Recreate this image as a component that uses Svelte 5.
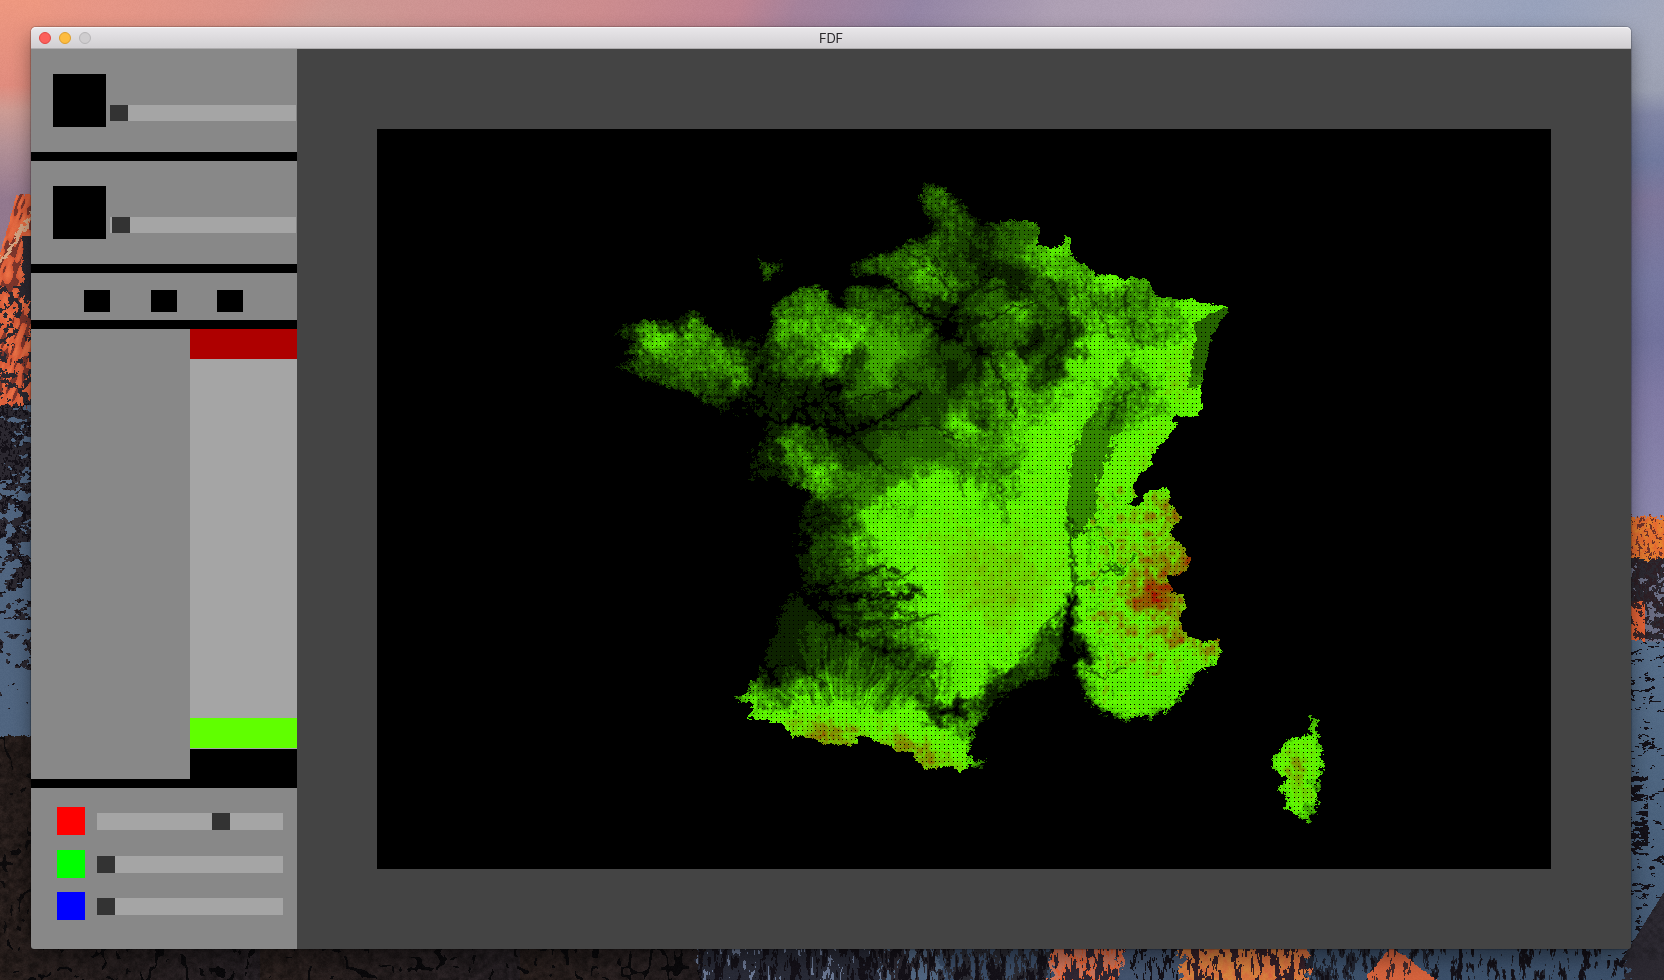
<script>
  import { onMount } from 'svelte';

  const views = [
    { knob: 0 },
    { knob: 2 },
  ];
  const modes = [1, 2, 3];
  const channels = [
    { name: 'red', knob: 115 },
    { name: 'lime', knob: 0 },
    { name: 'blue', knob: 0 },
  ];

  let mapCanvas;
  let wallCanvas;

  // ---------- noise ----------
  function hash(x, y) {
    let h = Math.imul(x, 374761393) + Math.imul(y, 668265263);
    h = Math.imul(h ^ (h >>> 13), 1274126177);
    return ((h ^ (h >>> 16)) >>> 0) / 4294967296;
  }
  function noise(x, y) {
    const xi = Math.floor(x), yi = Math.floor(y);
    let u = x - xi, v = y - yi;
    u = u * u * (3 - 2 * u);
    v = v * v * (3 - 2 * v);
    const a = hash(xi, yi), b = hash(xi + 1, yi), c = hash(xi, yi + 1), d = hash(xi + 1, yi + 1);
    return a + (b - a) * u + (c - a) * v + (a - b - c + d) * u * v;
  }
  function fbm(x, y) {
    return noise(x, y) * 0.5 + noise(x * 2.1 + 9, y * 2.1) * 0.28 + noise(x * 4.3, y * 4.3 + 5) * 0.22;
  }
  function ridge(x, y) {
    return Math.abs(noise(x, y) - 0.5) * 1.2 + Math.abs(noise(x * 2.1 + 3, y * 2.1) - 0.5) * 0.8;
  }

  // ---------- terrain ----------
  const mainland = [
    613,333,624,323,650,320,667,320,680,312,697,312,709,325,717,335,728,328,747,335,768,335,771,322,770,302,800,287,813,285,832,291,837,300,845,311,
    843,303,838,291,850,283,890,284,888,279,846,276,851,265,868,254,893,250,913,236,929,237,926,213,918,197,925,181,945,188,960,200,972,213,983,220,
    1000,221,1020,220,1037,222,1039,233,1037,245,1053,248,1062,245,1065,235,1071,234,1070,247,1072,257,1083,262,1098,275,1112,273,1125,280,1133,276,
    1148,280,1157,298,1167,295,1177,300,1192,297,1197,303,1213,303,1228,307,1222,320,1212,333,1207,353,1202,373,1200,397,1203,405,1197,416,1185,417,
    1175,413,1171,422,1178,422,1168,437,1152,452,1151,465,1137,475,1133,487,1137,492,1135,498,1128,503,1137,506,1142,500,1143,492,1168,488,1169,503,
    1173,507,1181,518,1171,527,1172,535,1180,542,1190,557,1187,568,1178,575,1166,577,1172,592,1183,595,1187,605,1179,617,1183,632,1203,642,1220,639,
    1221,650,1213,665,1198,673,1184,692,1169,710,1147,717,1128,720,1100,711,1086,700,1080,685,1072,675,1050,682,1030,681,1017,694,1000,704,987,717,
    975,729,967,757,983,760,987,765,972,765,958,772,950,765,928,770,913,758,913,752,897,750,892,745,880,742,868,737,857,735,857,744,823,744,813,737,
    792,736,783,725,767,720,748,717,753,708,750,702,733,697,743,693,758,677,761,660,765,643,775,623,781,597,786,588,798,592,800,577,790,550,793,520,
    805,500,808,490,787,484,750,482,746,467,748,452,765,440,761,420,739,418,719,411,700,397,664,386,637,375,614,365,638,357,621,352,635,340,616,340,
  ];
  const corsica = [
    1313,713,1317,723,1315,740,1323,757,1318,783,1318,803,1309,825,1297,819,1285,805,1287,796,1276,788,1287,779,1273,771,1272,757,1286,742,1302,734,
    1310,737,1311,723,
  ];
  const cotentin = [755,256,765,262,773,265,784,260,786,268,773,273,768,283,762,279,760,267];
  const rhinePlain = [1193,322,1212,312,1230,306,1214,335,1206,365,1202,385,1187,388,1190,365,1195,340];
  const saonePlain = [1094,414,1106,400,1120,396,1128,403,1124,420,1113,440,1105,460,1099,480,1096,505,1092,520,1074,540,1067,515,1068,470,1073,450,1082,428];

  const spots = [
    625,330,.25, 657,343,.85, 637,355,.35, 690,335,.75, 700,345,.65, 720,352,.7, 730,360,.5, 680,320,.15, 690,365,.6, 650,365,.4, 665,375,.35, 738,375,.65,
    720,390,.3, 700,385,.4, 735,337,.15, 760,350,.15, 755,375,.15, 745,400,.08, 750,420,.15, 780,310,.35, 800,310,.6, 785,325,.75, 800,328,.9, 820,310,.7,
    835,330,.75, 843,342,1.03, 830,350,.85, 862,328,.9, 875,335,.7, 828,362,.9, 800,350,.55, 790,365,.5, 775,350,.35, 855,362,.25, 890,350,.75, 880,370,.7,
    860,385,.45, 878,405,.35, 905,340,.55, 870,300,.45, 890,300,.4, 840,300,.2, 780,385,.18, 760,395,.12, 800,385,.2, 830,385,.15, 800,410,.12, 850,385,.35,
    840,405,.15, 900,380,.38, 930,380,.38, 930,410,.28, 900,420,.33, 860,430,.2, 840,430,.12, 800,435,.5, 790,450,.65, 810,465,.8, 825,475,.9, 840,480,.6,
    770,445,.18, 765,465,.15, 780,470,.15, 830,440,.15, 870,450,.3, 900,450,.42, 930,450,.45, 880,480,.5, 900,472,.5, 860,500,.5, 820,450,.4, 850,465,.35,
    870,268,.35, 900,262,.45, 915,255,.5, 925,270,.75, 935,285,.65, 950,292,.7, 960,300,.3, 940,300,.2, 880,280,.3, 935,200,.5, 942,210,.45, 930,225,.2,
    950,225,.4, 965,240,.35, 985,230,.2, 1000,240,.4, 1020,228,.45, 1030,235,.45, 1010,255,.4, 980,260,.15, 1000,270,.15, 1015,280,.15, 1040,252,.8,
    1055,250,1, 1068,240,.8, 1050,265,.8, 1080,272,.7, 1035,275,.3, 1060,290,.4, 1000,285,.4, 960,310,.2, 950,330,.05, 990,310,.45, 1000,320,.5,
    1020,312,.75, 1010,335,.4, 975,325,.35, 1040,300,.35, 1050,320,.4, 1060,335,.3, 1040,335,.12, 1070,350,.4, 975,345,.15, 1000,340,.4, 1025,350,.12,
    990,355,.2, 960,350,.3, 955,375,.15, 1000,365,.55, 1015,370,.75, 1000,380,.6, 1050,365,.25, 1040,375,.35, 1070,335,.35, 960,275,.3, 940,250,.4,
    1085,300,.7, 1095,320,.8, 1115,282,1.03, 1112,305,.5, 1090,290,.8, 1100,340,.98, 1130,295,.6, 1122,320,.75, 1140,300,.6, 1150,310,.75, 1170,315,.7,
    1190,305,1.03, 1210,305,1, 1140,330,.65, 1160,335,.7, 1175,325,.85, 1180,350,1.1, 1090,350,1.02, 1080,370,.98, 1060,390,.9, 1110,370,1.06, 1150,360,1.03,
    1180,370,1.12, 1175,385,1.16, 1150,390,.9, 1190,390,1.03, 1195,405,1.03, 1000,400,.65, 1025,395,.75, 1040,410,.75, 1060,420,1.05, 1040,440,1.05,
    1080,400,1.02, 1000,420,.6, 962,427,.95, 952,435,.7, 980,420,.35, 990,450,.65, 1000,440,.8, 960,450,.5, 940,440,.4, 1020,420,.9, 1010,470,.6,
    1030,480,1.04, 1000,490,.8, 1050,470,1.03, 1060,450,1.04, 1140,410,.9, 1155,430,1.1, 1130,440,1.0, 1140,460,1.15, 1120,470,1.04, 1115,500,1.08,
    1110,520,1.06, 1115,388,.7, 1130,383,.55, 1142,395,.6, 1130,410,.65, 900,490,1.02, 930,485,1.04, 960,490,1.04, 870,510,1, 885,530,1.04, 930,530,1.1, 950,550,1.15,
    975,560,1.25, 965,580,1.24, 985,600,1.22, 1010,560,1.2, 1005,590,1.26, 1000,620,1.2, 960,620,1.06, 920,580,1.06, 940,650,1.06, 970,650,1.06,
    970,685,1.06, 1000,660,1.06, 1020,540,1.12, 1050,560,1.1, 1030,590,1.2, 1055,600,1.1, 1010,510,1.06, 1040,520,1.05, 930,610,1.04, 905,600,.95,
    905,620,.85, 930,672,1.03, 1020,640,1.1, 1040,620,1.08, 950,510,1.06, 895,560,1.04, 862,540,.8, 860,560,.65, 880,560,.95, 880,585,.7, 855,580,.45,
    830,575,.3, 810,570,.2, 820,550,.3, 800,540,.08, 830,530,.2, 840,550,.4, 815,510,.15, 840,505,.35, 825,600,.15, 850,600,.22, 880,605,.4, 870,625,.5,
    895,625,.75, 850,615,.25, 820,610,.18, 910,640,.65, 790,610,.14, 780,640,.15, 800,640,.2, 820,630,.3, 830,640,.35, 775,670,.12, 800,660,.2, 790,680,.3,
    845,650,.35, 850,670,.45, 870,665,.4, 880,645,.22, 900,660,.28, 925,665,.35, 890,680,.5, 910,680,.45, 930,686,.5, 820,690,.75, 845,690,.7, 815,705,1,
    790,700,.6, 770,700,.6, 755,705,1, 770,715,1.05, 800,720,1.1, 790,730,1.3, 810,730,1.4, 830,735,1.5, 850,738,1.35, 840,715,1.04, 870,715,1.03,
    880,700,.75, 900,715,1.02, 880,735,1.25, 900,745,1.4, 915,750,1.45, 925,760,1.45, 945,757,1.3, 940,735,1.12, 920,725,1.06, 955,745,1.02,
    950,765,1.25, 940,697,1.04, 962,693,1.04, 940,708,.2, 960,710,.15, 985,700,.25, 965,725,.8, 1020,672,.3, 1040,655,.45, 1058,635,.3, 1070,655,.02,
    1060,672,.02, 1080,650,.1, 1000,690,.15, 1010,685,.25, 1100,550,1.05, 1090,560,1.04, 1120,540,1.1, 1150,500,1.1, 1150,520,1.2, 1175,515,1.65,
    1165,530,1.3, 1160,550,1.35, 1180,555,1.6, 1175,562,1.55, 1140,560,1.3, 1130,580,1.35, 1150,590,1.6, 1145,600,1.55, 1170,605,1.45, 1130,530,1.1,
    1110,590,1.15, 1110,620,1.15, 1100,600,1.06, 1140,620,1.2, 1165,630,1.4, 1180,630,1.45, 1205,645,1.45, 1150,650,1.15, 1120,650,1.1, 1100,630,1.08,
    1190,660,1.08, 1180,675,1, 1160,688,.8, 1130,697,1.04, 1110,692,.95, 1095,680,.8, 1090,665,.95, 1110,665,1.04, 1140,705,.9, 1105,570,1.06,
    1150,670,1.1, 1090,610,1.04, 1085,580,1.03, 1130,680,1.05, 1295,760,1.25, 1300,775,1.35, 1305,790,1.2, 1308,800,1.15, 1313,725,1.04, 1282,765,1.04,
    1318,780,.9, 1310,815,.8, 1285,800,1.03, 1295,740,1.05, 1315,755,1.06, 770,268,.45,
  ];
  const rivers = [
    [4.5, .85, 850,280,890,283,905,295,915,310,930,315,945,320,955,325],
    [3, .6, 955,325,962,345,990,355,997,370,1005,390,1015,415],
    [3, .7, 950,315,965,292,985,280,995,270],
    [2.5, .6, 970,290,1000,287,1030,290],
    [2.5, .6, 955,322,990,318,1010,308,1035,303],
    [4, .5, 1048,280,1062,300,1068,330,1062,350,1045,362],
    [2, .4, 1080,275,1092,300,1105,325,1110,340],
    [2, .3, 1072,285,1084,310,1090,335],
    [2.5, .45, 1127,285,1126,310,1132,330,1140,345],
    [2, .3, 1145,290,1148,315,1155,340],
    [1.6, .5, 900,245,920,262,940,280,952,296],
    [1.6, .45, 912,243,930,256,948,275],
    [4.5, .85, 745,418,770,420,807,423,847,433,867,425,900,410,920,393],
    [2, .5, 847,433,880,428,930,425,960,440],
    [2, .5, 847,433,870,455,890,470],
    [3, .7, 828,424,820,400,830,390,850,382],
    [2, .5, 835,405,870,395,900,388],
    [2, .6, 900,290,925,312,950,318],
    [6, .95, 792,580,803,595,823,613,843,633],
    [4, .6, 843,633,863,643,880,650,907,650],
    [3, .45, 880,650,895,662,907,670,933,683],
    [2.5, .35, 893,662,893,685,885,705],
    [4, .85, 800,592,820,597,870,597,907,595,920,588],
    [3, .7, 805,590,820,585,847,582,865,575,883,567,900,572],
    [2, .55, 823,583,835,572,850,562],
    [2, .55, 873,592,890,580,905,576,915,568],
    [4, .6, 905,585,918,590,925,596],
    [3, .6, 845,633,870,623,907,623,937,613],
    [2, .5, 870,608,900,612,920,618],
    [3, .6, 763,670,790,660,803,668,823,683],
    [4, .6, 1070,520,1072,560,1075,590,1070,610],
    [7, .95, 1072,600,1067,625,1068,650,1072,675],
    [2.5, .55, 1075,583,1095,580,1110,563,1120,575,1133,555],
    [2.5, .45, 1070,530,1098,528,1112,545],
    [2, .5, 1085,670,1103,677,1125,665],
    [3, .4, 962,470,962,495],
    [3, .3, 998,480,1003,510,1006,525],
    [5, .6, 920,697,935,710,965,712],
    [3, .5, 1060,610,1045,625,1038,650],
    [3, .4, 1105,425,1120,400,1140,385],
  ];

  function inside(p, x, y) {
    let hit = false;
    for (let i = 0, j = p.length - 2; i < p.length; j = i, i += 2) {
      if (p[i + 1] > y !== p[j + 1] > y && x < ((p[j] - p[i]) * (y - p[i + 1])) / (p[j + 1] - p[i + 1]) + p[i]) hit = !hit;
    }
    return hit;
  }
  function segment(px, py, ax, ay, bx, by) {
    const dx = bx - ax, dy = by - ay;
    const t = Math.max(0, Math.min(1, ((px - ax) * dx + (py - ay) * dy) / (dx * dx + dy * dy)));
    return Math.hypot(px - ax - t * dx, py - ay - t * dy);
  }

  const OX = 377, OY = 129;
  const GX = 604, GY = 170, STEP = 4, COLS = 185, ROWS = 170;

  // Height lost per open-water sample: low shores fade out, land borders stay sharp.
  function shoreLoss(x, y) {
    if (x > 1250) return 0.03;
    if (x > 965 && y > 640) return y > 690 || x < 1060 ? 0.07 : 0.05;
    if (x < 1000 && y < 715) return x < 760 ? 0.03 : 0.04;
    return 0;
  }

  function drawMap() {
    const ctx = mapCanvas.getContext('2d');
    const img = ctx.createImageData(1174, 740);
    const base = new Float32Array(COLS * ROWS);
    for (let j = 0; j < ROWS; j++) {
      for (let i = 0; i < COLS; i++) {
        const x = GX + i * STEP, y = GY + j * STEP;
        let s = 0, w = 0;
        for (let k = 0; k < spots.length; k += 3) {
          const d = (x - spots[k]) ** 2 + (y - spots[k + 1]) ** 2 + 18;
          const q = 1 / (d * d);
          s += q * spots[k + 2];
          w += q;
        }
        base[j * COLS + i] = s / w;
      }
    }
    const cut = new Float32Array(740 * 680).fill(1);
    for (const r of rivers) {
      const width = r[0], depth = r[1];
      for (let k = 2; k < r.length - 2; k += 2) {
        const [ax, ay, bx, by] = [r[k], r[k + 1], r[k + 2], r[k + 3]];
        for (let y = Math.min(ay, by) - 12; y < Math.max(ay, by) + 12; y++) {
          for (let x = Math.min(ax, bx) - 12; x < Math.max(ax, bx) + 12; x++) {
            const d = segment(x, y, ax, ay, bx, by) / width;
            const f = 1 - depth * Math.exp(-d * d * 1.6);
            const at = (y - GY) * 740 + (x - GX);
            if (f < cut[at]) cut[at] = f;
          }
        }
      }
    }
    const land = new Uint8Array(760 * 700);
    for (let y = 0; y < 700; y++) {
      for (let x = 0; x < 760; x++) {
        const px = x + 596, py = y + 160;
        if (inside(mainland, px, py) || inside(corsica, px, py) || inside(cotentin, px, py)) land[y * 760 + x] = 1;
      }
    }
    const isLand = (x, y) => land[Math.round(y - 160) * 760 + Math.round(x - 596)];

    for (let i = 3; i < img.data.length; i += 4) img.data[i] = 255;
    for (let y = 176; y < 832; y++) {
      for (let x = 612; x < 1330; x++) {
        const loss = shoreLoss(x, y);
        const wob = x > 965 && y > 650 && x < 1200 ? 16 : x > 1250 ? 14 : loss ? 12 : 7;
        const ex = x + (fbm(x / 5, y / 4) - 0.5) * wob;
        const ey = y + (fbm(x / 5 + 70, y / 4 + 31) - 0.5) * wob;
        if (!isLand(ex, ey)) continue;
        const wx = x + (fbm(x / 11, y / 11 + 40) - 0.5) * 30;
        const wy = y + (fbm(x / 11 + 20, y / 11) - 0.5) * 30;
        const gx = Math.max(0, Math.min(COLS - 2, (wx - GX) / STEP));
        const gy = Math.max(0, Math.min(ROWS - 2, (wy - GY) / STEP));
        const i0 = Math.floor(gx), j0 = Math.floor(gy), u = gx - i0, v = gy - j0, o = j0 * COLS + i0;
        let e = (base[o] * (1 - u) + base[o + 1] * u) * (1 - v) + (base[o + COLS] * (1 - u) + base[o + COLS + 1] * u) * v;
        const alps = x > 1085 && y > 485 && x < 1240;
        let rough = e < 0.95 ? 0.22 + 0.32 * e : e < 1.08 ? 0.16 : e < 1.2 ? 0.3 : 0.5;
        if (alps && e > 1.03) rough = 0.55;
        if (x > 850 && x < 975 && y > 335 && y < 500) rough *= 0.35;
        else if (x > 960 && x < 1070 && y > 225 && y < 380) rough *= 0.7;
        else if (x > 930 && x < 1060 && y > 500 && y < 650) rough = 0.2;
        else if (x < 815 && y > 600 && y < 672) rough *= 0.4;
        if (inside(rhinePlain, ex, ey)) { e = 0.42 + Math.max(0, (y - 365) / 120); rough = 0.08; }
        else if (inside(saonePlain, x + (fbm(x / 5, y / 5) - 0.5) * 22, y + (fbm(x / 5 + 70, y / 5 + 31) - 0.5) * 22)) {
          e = 0.54;
          rough = y < 430 ? 0.3 : 0.12;
        }
        let n = ridge(x / 8, y / 8) * 0.85 + ridge(x / 3.4 + 7, y / 3.4) * 0.35 + fbm(x / 2.8, y / 2.8) * 0.45 - (x < 1000 ? 0.8 : 0.74);
        if (alps) n = ridge(x / 14, y / 14) * 1.2 + ridge(x / 6, y / 6) * 0.6 - 0.66;
        const fx = x - 842, fy = 748 - y, r = Math.hypot(fx, fy);
        if (r < 118 && r > 20 && fy > 28 && e < 1.02 && x > 775) {
          const a = Math.atan2(fx, fy);
          const bend = (noise(x / 15, y / 15) - 0.5) * 0.12;
          n = n * 0.7 + (noise((a + bend) * 30 + 50, r / 30) - 0.5) * 0.75;
        }
        e += n * rough * 1.1 + (hash(x, y) - 0.5) * 0.04;
        if (alps && x > 1120) e = Math.max(e, 0.98);

        if (loss) {
          const sx = x + (fbm(x / 4 + 11, y / 3) - 0.5) * 17;
          const sy = y + (fbm(x / 4, y / 3 + 17) - 0.5) * 17;
          let open = 0;
          for (let k = 0; k < 8; k++) {
            const a = (k * Math.PI) / 4;
            if (!isLand(sx + Math.cos(a) * 6, sy + Math.sin(a) * 6)) open++;
            if (k % 2 === 0 && !isLand(sx + Math.cos(a) * 2, sy + Math.sin(a) * 2)) open++;
          }
          e -= open * loss;
        }

        const rx = Math.round(x + (noise(x / 4, y / 4) - 0.5) * 8) - GX;
        const ry = Math.round(y + (noise(x / 4 + 9, y / 4 + 9) - 0.5) * 8) - GY;
        const c = cut[ry * 740 + rx];
        if (c < 1) e = e * c;
        if (Math.floor(x % 4.4286) === 0 && Math.floor((y + 1) % 4.4286) === 0) continue;
        let R = 0, G = 0;
        if (e >= 1) {
          const t = Math.min(1, (e - 1) * 0.98);
          R = 96 + 70 * t;
          G = 255 * (1 - t);
        } else {
          const q = Math.max(0, Math.floor(e * 7.6 + 0.35)) / 7.6;
          R = 96 * q;
          G = 255 * q;
        }
        const at = ((y - OY) * 1174 + (x - OX)) * 4;
        img.data[at] = R;
        img.data[at + 1] = G;
      }
    }
    ctx.putImageData(img, 0, 0);
  }

  // ---------- desktop wallpaper ----------
  function ramp(stops, t) {
    let k = 0;
    while (k < stops.length - 2 && t > stops[k + 1][0]) k++;
    const [t0, c0] = stops[k], [t1, c1] = stops[k + 1];
    const f = Math.max(0, Math.min(1, (t - t0) / (t1 - t0)));
    return c0.map((v, i) => v + (c1[i] - v) * f);
  }
  function mix(a, b, f) {
    return a.map((v, i) => v + (b[i] - v) * f);
  }
  const topSky = [
    [0, [238,152,128]], [90, [231,150,133]], [260, [218,148,138]], [330, [207,152,146]], [460, [205,146,146]], [600, [204,140,142]], [740, [190,132,146]],
    [800, [165,130,155]], [920, [148,133,165]], [1060, [174,160,180]], [1200, [178,164,184]], [1330, [165,163,186]], [1440, [158,164,188]], [1540, [152,162,188]], [1700, [166,170,188]],
  ];
  const leftSky = [[0, [238,152,128]], [85, [224,140,126]], [110, [205,155,147]], [145, [180,145,150]], [200, [146,120,142]]];
  const rightSky = [
    [0, [166,170,188]], [90, [155,160,178]], [115, [128,133,165]], [160, [113,121,158]], [200, [126,118,154]], [280, [118,120,160]], [340, [114,114,156]],
    [400, [128,122,164]], [515, [138,134,172]],
  ];
  const brown = [34,26,24], slate = [43,40,48], snow = [80,101,128], orange = [226,98,54], ink = [20,17,24];

  function colorAt(x, y) {
    const g = fbm(x / 5, y / 5), f = fbm(x / 2.2, y / 3.2), cr = ridge(x / 16, y / 20);
    if (x < 40 && y < 940) {
      const edge = Math.max(194, 252 - x * 3.6) + (f - 0.5) * 6;
      if (y < edge) return ramp(leftSky, y);
      if (y < 405 + (f - 0.5) * 12) {
        if (Math.abs(y - 262 + x * 1.5 + (g - 0.5) * 20) < 4) return [212, 166, 132];
        if (x > 22 + (g - 0.5) * 14 && y > 235 && y < 300) return slate;
        if (y > 285 && g < 0.46) return slate;
        const streak = noise((x + y * 0.42) / 3, (y - x) / 14);
        return streak > 0.34 ? [200 + streak * 38, 72 + streak * 45, 44 + streak * 28] : [125, 54, 44];
      }
      if (y < 735 + (g - 0.5) * 6) {
        const bias = y < 480 ? 0.68 : y < 540 ? 0.57 : y < 620 ? 0.47 : y < 670 ? 0.4 : 0.2;
        return fbm(x / 9, y / 6) > bias ? snow : f > 0.45 ? slate : ink;
      }
      return cr < 0.13 ? [13, 11, 12] : brown.map((v) => v * (0.5 + g * 1.1));
    }
    if (x > 1600 && y < 960) {
      if (y < 516 + (f - 0.5) * 12) return mix(ramp(topSky, x + y * 0.4), ramp(rightSky, y), Math.min(1, y / 80));
      if (y < 558 + (g - 0.5) * 20) return f < 0.38 ? [115, 52, 42] : [228, 92 + g * 50, 48];
      if (y < 640 + (g - 0.5) * 8) {
        if (x < 1645 && y > 600) return g > 0.45 ? orange : [60, 38, 40];
        return g > 0.62 ? [105, 108, 130] : f > 0.5 ? slate : [45, 32, 38];
      }
      if (y > 945 - (x - 1630) * 1.6) return slate.map((v) => v * (0.7 + g * 0.5));
      const dark = y > 775 && y < 850 && x < 1648 ? 0.47 : 0.66;
      return fbm(x / 7, y / 3.4) > dark ? ink : mix([66, 88, 114], [86, 110, 138], 1 - (y - 640) / 320);
    }
    if (y < 60) return mix(ramp(topSky, x + y * 0.4), [206, 160, 152], Math.max(0, 1 - Math.abs(x - 330) / 90) * (y / 60));

    const v = fbm(x / 4, y / 13);
    const w = x + (g - 0.5) * 26;
    if (w < 700) return cr < 0.13 ? [10, 9, 11] : mix(brown, [30, 27, 33], (x % 260) / 400).map((q) => q * (0.6 + g * 0.95));
    if (w < 880) return v > 0.69 ? [105, 118, 145] : v < 0.42 ? ink : [40, 42, 54];
    if (w < 940) return v > 0.56 ? snow : v < 0.42 ? ink : slate;
    if (w < 1050) return v > 0.58 ? [58, 76, 102] : v < 0.44 ? ink : [42, 42, 50];
    if (w < 1122) return v > 0.55 ? [205, 115, 88] : v > 0.47 ? orange : [48, 38, 50];
    if (w < 1180) return v > 0.4 ? [66, 82, 108] : ink;
    if (w < 1308) return v > 0.43 ? [215, 95 + g * 50, 62] : [52, 32, 40];
    if (Math.abs(x - 1390 - (y - 945) * 0.3) < 2 + (y - 948) * 1.1 + (g - 0.5) * 8) return v > 0.38 ? [212, 98, 60] : [70, 42, 44];
    if (w > 1628) return slate;
    return v > (w < 1430 ? 0.52 : 0.43) ? [60, 80, 106] : v < 0.38 ? ink : [34, 38, 50];
  }

  function drawWall() {
    const ctx = wallCanvas.getContext('2d');
    const img = ctx.createImageData(1664, 980);
    for (let y = 0; y < 980; y++) {
      for (let x = 0; x < 1664; x++) {
        if (x === 40 && y >= 60 && y < 940) x = 1620;
        const c = colorAt(x, y);
        const grain = (hash(x, y) - 0.5) * 5;
        const at = (y * 1664 + x) * 4;
        img.data[at] = c[0] + grain;
        img.data[at + 1] = c[1] + grain;
        img.data[at + 2] = c[2] + grain;
        img.data[at + 3] = 255;
      }
    }
    ctx.putImageData(img, 0, 0);
  }

  onMount(() => {
    drawWall();
    drawMap();
  });
</script>

<div class="desktop">
  <canvas class="wall" bind:this={wallCanvas} width="1664" height="980"></canvas>
  <div class="window">
    <header class="titlebar">
      <div class="lights">
        <span class="light close"></span>
        <span class="light minimize"></span>
        <span class="light zoom"></span>
      </div>
      <span class="title">FDF</span>
    </header>
    <div class="content">
      <aside class="sidebar">
        {#each views as view}
          <section class="view">
            <div class="swatch"></div>
            <div class="track"><div class="knob" style:margin-left="{view.knob}px"></div></div>
          </section>
        {/each}
        <section class="modes">
          {#each modes as mode (mode)}<div class="mode"></div>{/each}
        </section>
        <section class="altitudes">
          <div class="scale">
            <div class="high"></div>
            <div class="mid"></div>
            <div class="low"></div>
            <div class="sea"></div>
          </div>
        </section>
        <section class="mixer">
          {#each channels as channel}
            <div class="channel">
              <div class="color" style:background={channel.name}></div>
              <div class="track"><div class="knob" style:margin-left="{channel.knob}px"></div></div>
            </div>
          {/each}
        </section>
      </aside>
      <main class="stage">
        <canvas class="map" bind:this={mapCanvas} width="1174" height="740"></canvas>
      </main>
    </div>
  </div>
</div>

<style>
  :global(body) {
    margin: 0;
    overflow: hidden;
  }
  .desktop {
    position: relative;
    box-sizing: border-box;
    width: 1664px;
    height: 980px;
    padding: 27px 33px 31px 31px;
    overflow: hidden;
    background: #29242a;
  }
  .wall {
    position: absolute;
    inset: 0;
  }
  .window {
    position: relative;
    display: flex;
    flex-direction: column;
    width: 1600px;
    height: 922px;
    border-radius: 5px 5px 3px 3px;
    box-shadow: 0 0 1px 1px rgba(0, 0, 0, 0.22), 0 9px 20px rgba(0, 0, 0, 0.42);
  }
  .titlebar {
    display: grid;
    grid-template-columns: 1fr auto 1fr;
    align-items: center;
    box-sizing: border-box;
    height: 22px;
    padding-left: 8px;
    border-bottom: 1px solid #aeacae;
    border-radius: 5px 5px 0 0;
    background: linear-gradient(#e9e7ea, #d1cfd2);
    box-shadow: inset 0 1px #f6f5f7;
  }
  .lights {
    display: flex;
    gap: 8px;
  }
  .light {
    box-sizing: border-box;
    width: 12px;
    height: 12px;
    border: 1px solid;
    border-radius: 50%;
  }
  .close { background: #fc605c; border-color: #e14641; }
  .minimize { background: #fdbc40; border-color: #dd9d2d; }
  .zoom { background: #cfcdcf; border-color: #b7b5b7; }
  .title {
    padding-right: 8px;
    color: #2b292c;
    font: 13px/20px Inter, "Open Sans", sans-serif;
    letter-spacing: -0.3px;
  }
  .content {
    display: flex;
    height: 900px;
    overflow: hidden;
    border-radius: 0 0 3px 3px;
  }
  .sidebar {
    display: flex;
    flex-direction: column;
    gap: 9px;
    width: 266px;
    background: #000;
  }
  .sidebar > section {
    box-sizing: border-box;
    flex-shrink: 0;
    background: #888;
  }
  .view {
    display: flex;
    gap: 4px;
    height: 103px;
    padding: 25px 1px 25px 22px;
  }
  .swatch {
    width: 53px;
    height: 53px;
    background: #000;
  }
  .track {
    width: 186px;
    height: 17px;
    background: #a5a5a5;
  }
  .view .track {
    height: 16px;
    margin-top: 31px;
  }
  .knob {
    width: 18px;
    height: 100%;
    background: #333;
  }
  .modes {
    display: flex;
    justify-content: space-between;
    height: 47px;
    padding: 17px 54px 8px 53px;
  }
  .mode {
    width: 26px;
    height: 22px;
    background: #000;
  }
  .altitudes {
    display: flex;
    justify-content: flex-end;
    height: 450px;
  }
  .scale {
    display: flex;
    flex-direction: column;
    width: 107px;
    background: #a5a5a5;
  }
  .high { height: 30px; background: #ae0000; }
  .mid { flex: 1; }
  .low { height: 30px; margin-bottom: 1px; background: #60ff00; }
  .sea { height: 30px; background: #000; }
  .mixer {
    height: 161px;
    padding: 19px 14px 0 26px;
  }
  .channel {
    display: flex;
    gap: 12px;
    height: 28px;
    margin-bottom: 14px;
  }
  .channel:first-child { margin-bottom: 15px; }
  .channel:last-child { margin-bottom: 0; }
  .channel .track { margin-top: 6px; }
  .color {
    width: 28px;
    height: 28px;
  }
  .stage {
    display: grid;
    place-items: center;
    flex: 1;
    background: #444;
  }
  .map {
    display: block;
    background: #000;
  }
</style>
